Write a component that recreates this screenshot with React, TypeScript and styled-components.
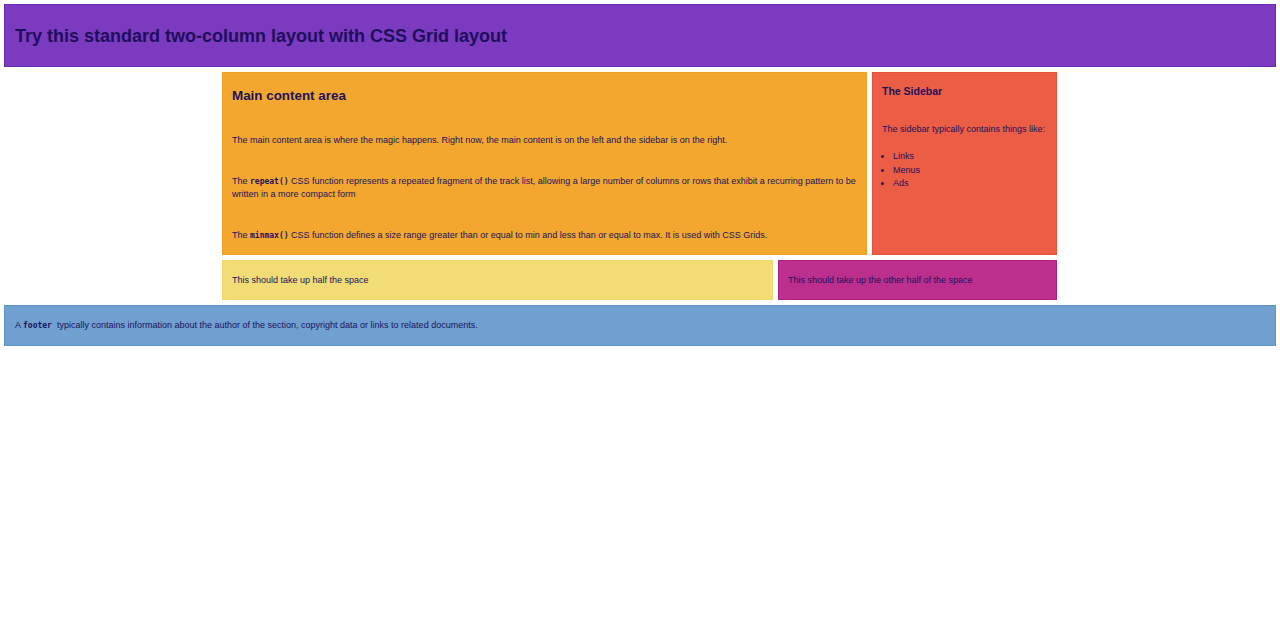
import React from "react";
import styled, { createGlobalStyle } from "styled-components";

const Global = createGlobalStyle`
  html, body { margin: 0; padding: 0; background: #fff; }
  body { font-family: "Liberation Sans", Arial, sans-serif; color: #20125f; }
  * { box-sizing: border-box; }
`;

const Page = styled.div`
  padding: 4px;
  display: grid;
  row-gap: 5px;
`;

const Header = styled.header`
  height: 63px;
  display: flex;
  align-items: center;
  padding: 0 10px;
  background: #7c3ac1;
  border: 1px solid #6a2bb3;
`;

const Title = styled.h1`
  margin: 0;
  font-size: 18px;
  line-height: 22px;
  font-weight: 700;
  color: #1d0f5a;
`;

const Wrapper = styled.div`
  width: 835px;
  margin-left: calc((100% - 836px) / 2);
  display: grid;
  grid-template-columns: 645px 185px;
  gap: 5px;
`;

const Halves = styled.div`
  grid-column: 1 / -1;
  display: grid;
  grid-template-columns: 551px 279px;
  gap: 5px;
`;

const Box = styled.section<{ $bg: string; $border: string }>`
  background: ${(p) => p.$bg};
  border: 1px solid ${(p) => p.$border};
  padding: 10px 9px;
  font-size: 9px;
  line-height: 13px;
`;

const MainBox = styled(Box)`
  padding-bottom: 12px;
`;

const H2 = styled.h2`
  margin: 5px 0 30px;
  font-size: 13.4px;
  line-height: 16px;
  font-weight: 700;
`;

const H3 = styled.h3`
  margin: 2px 0 0;
  font-size: 10.5px;
  line-height: 12px;
  font-weight: 700;
`;

const P = styled.p`
  margin: 28px 0 0;
`;

const SideP = styled.p`
  margin: 26px 0 0;
`;

const List = styled.ul`
  margin: 14px 0 0;
  padding-left: 11px;
  line-height: 13.5px;
`;

const Code = styled.code`
  font-family: "DejaVu Sans Mono", "Liberation Mono", monospace;
  font-weight: 700;
  font-size: 8px;
`;

const Half = styled.div<{ $bg: string; $border: string }>`
  height: 40px;
  display: flex;
  align-items: center;
  padding: 0 9px;
  background: ${(p) => p.$bg};
  border: 1px solid ${(p) => p.$border};
  font-size: 9px;
  line-height: 13px;
`;

const Footer = styled.footer`
  height: 41px;
  display: flex;
  align-items: center;
  padding: 0 10px;
  background: #6fa0cf;
  border: 1px solid #5f94c6;
  font-size: 9px;
  line-height: 13px;
  white-space: pre;
`;

export default function App() {
  return (
    <>
      <Global />
      <Page>
        <Header>
          <Title>Try this standard two-column layout with CSS Grid layout</Title>
        </Header>
        <Wrapper>
          <MainBox $bg="#f3a72f" $border="#f0a025">
            <H2>Main content area</H2>
            <P>
              The main content area is where the magic happens. Right now, the main content is on
              the left and the sidebar is on the right.
            </P>
            <P>
              The <Code>repeat()</Code> CSS function represents a repeated fragment of the track
              list, allowing a large number of columns or rows that exhibit a recurring pattern to
              be written in a more compact form
            </P>
            <P>
              The <Code>minmax()</Code> CSS function defines a size range greater than or equal to
              min and less than or equal to max. It is used with CSS Grids.
            </P>
          </MainBox>
          <Box $bg="#eb5e45" $border="#e4513a">
            <H3>The Sidebar</H3>
            <SideP>The sidebar typically contains things like:</SideP>
            <List>
              <li>Links</li>
              <li>Menus</li>
              <li>Ads</li>
            </List>
          </Box>
          <Halves>
            <Half $bg="#f2dc76" $border="#f0d767">This should take up half the space</Half>
            <Half $bg="#bc2f8c" $border="#b0217f">This should take up the other half of the space</Half>
          </Halves>
        </Wrapper>
        <Footer>
          A <Code>footer</Code>  typically contains information about the author of the section,
          copyright data or links to related documents.
        </Footer>
      </Page>
    </>
  );
}
